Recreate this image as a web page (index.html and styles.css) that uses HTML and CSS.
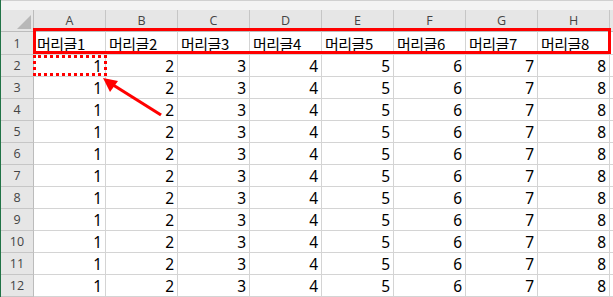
FILE: index.html
```html
<!DOCTYPE html>
<html lang="ko">
<head>
<meta charset="utf-8">
<link rel="stylesheet" href="styles.css">
</head>
<body>
<div class="sheet">
  <div class="topband"></div>
  <div class="grid">
    <div class="corner"><span class="tri"></span></div>
    <div class="colhead">A</div><div class="colhead">B</div><div class="colhead">C</div><div class="colhead">D</div>
    <div class="colhead">E</div><div class="colhead">F</div><div class="colhead">G</div><div class="colhead">H</div>
    <div class="rest head"></div>

    <div class="rowhead r1">1</div>
    <div class="cell text r1">머리글1</div><div class="cell text r1">머리글2</div><div class="cell text r1">머리글3</div><div class="cell text r1">머리글4</div>
    <div class="cell text r1">머리글5</div><div class="cell text r1">머리글6</div><div class="cell text r1">머리글7</div><div class="cell text r1">머리글8</div>
    <div class="rest r1"></div>
  </div>
  <div class="grid body" id="body"></div>

  <div class="redbox"></div>
  <div class="dotbox"></div>
  <svg class="arrow" width="70" height="45" viewBox="0 0 70 45">
    <line x1="63" y1="42" x2="12" y2="10" stroke="#ff0000" stroke-width="3.2"/>
    <polygon points="5,5 20,8 12,19" fill="#ff0000"/>
  </svg>
</div>
<script>
  var body = document.getElementById('body');
  var html = '';
  for (var r = 2; r <= 12; r++) {
    html += '<div class="rowhead">' + r + '</div>';
    for (var c = 1; c <= 8; c++) html += '<div class="cell num">' + c + '</div>';
    html += '<div class="rest"></div>';
  }
  body.innerHTML = html;
</script>
</body>
</html>
```

FILE: styles.css
```css
html, body {
  margin: 0;
  padding: 0;
  background: #ffffff;
}
.sheet {
  position: relative;
  width: 613px;
  height: 297px;
  overflow: hidden;
  border-left: 1px solid #217346;
  box-sizing: border-box;
}
.topband {
  height: 10px;
  background: #f3f3f3;
  border-top: 1px solid #d0d0d0;
  box-sizing: border-box;
}
.grid {
  display: grid;
  grid-template-columns: 33px repeat(8, 72px) 3px;
}
.corner {
  position: relative;
  height: 22px;
  background: #e6e6e6;
  border-right: 1px solid #bcbcbc;
  border-bottom: 1px solid #bcbcbc;
  box-sizing: border-box;
}
.tri {
  position: absolute;
  right: 2px;
  bottom: 2px;
  width: 0;
  height: 0;
  border-left: 14px solid transparent;
  border-bottom: 14px solid #b8b8b8;
}
.colhead {
  height: 22px;
  background: #e6e6e6;
  border-right: 1px solid #c6c6c6;
  border-bottom: 1px solid #bcbcbc;
  box-sizing: border-box;
  display: flex;
  align-items: center;
  justify-content: center;
  font-family: "Open Sans", "Noto Sans", sans-serif;
  font-size: 12.5px;
  color: #444444;
}
.rest.head {
  background: #e6e6e6;
  border-bottom: 1px solid #bcbcbc;
}
.rowhead {
  height: 22px;
  background: #e6e6e6;
  border-right: 1px solid #bcbcbc;
  border-bottom: 1px solid #c6c6c6;
  box-sizing: border-box;
  display: flex;
  align-items: center;
  justify-content: center;
  font-family: "Open Sans", "Noto Sans", sans-serif;
  font-size: 12.5px;
  color: #444444;
}
.rowhead.r1, .cell.r1, .rest.r1 {
  height: 23px;
}
.cell {
  height: 22px;
  border-right: 1px solid #d4d4d4;
  border-bottom: 1px solid #d4d4d4;
  box-sizing: border-box;
  display: flex;
  align-items: center;
  font-family: "Noto Sans", "Noto Sans CJK KR", sans-serif;
  font-size: 15.5px;
  color: #000000;
  white-space: nowrap;
  overflow: hidden;
}
.cell.text {
  font-family: "Noto Sans CJK KR", sans-serif;
  font-size: 15px;
  letter-spacing: -0.5px;
  padding-left: 3px;
}
.cell.num {
  justify-content: flex-end;
  padding-right: 3px;
}
.rest {
  height: 22px;
  border-bottom: 1px solid #d4d4d4;
  box-sizing: border-box;
}
.redbox {
  position: absolute;
  left: 32px;
  top: 28px;
  width: 578px;
  height: 26px;
  border: 3px solid #ff0000;
  box-sizing: border-box;
}
.dotbox {
  position: absolute;
  left: 32px;
  top: 55px;
  width: 74px;
  height: 21px;
  border: 3px dotted #ff0000;
  box-sizing: border-box;
}
.arrow {
  position: absolute;
  left: 97px;
  top: 73px;
}
```
